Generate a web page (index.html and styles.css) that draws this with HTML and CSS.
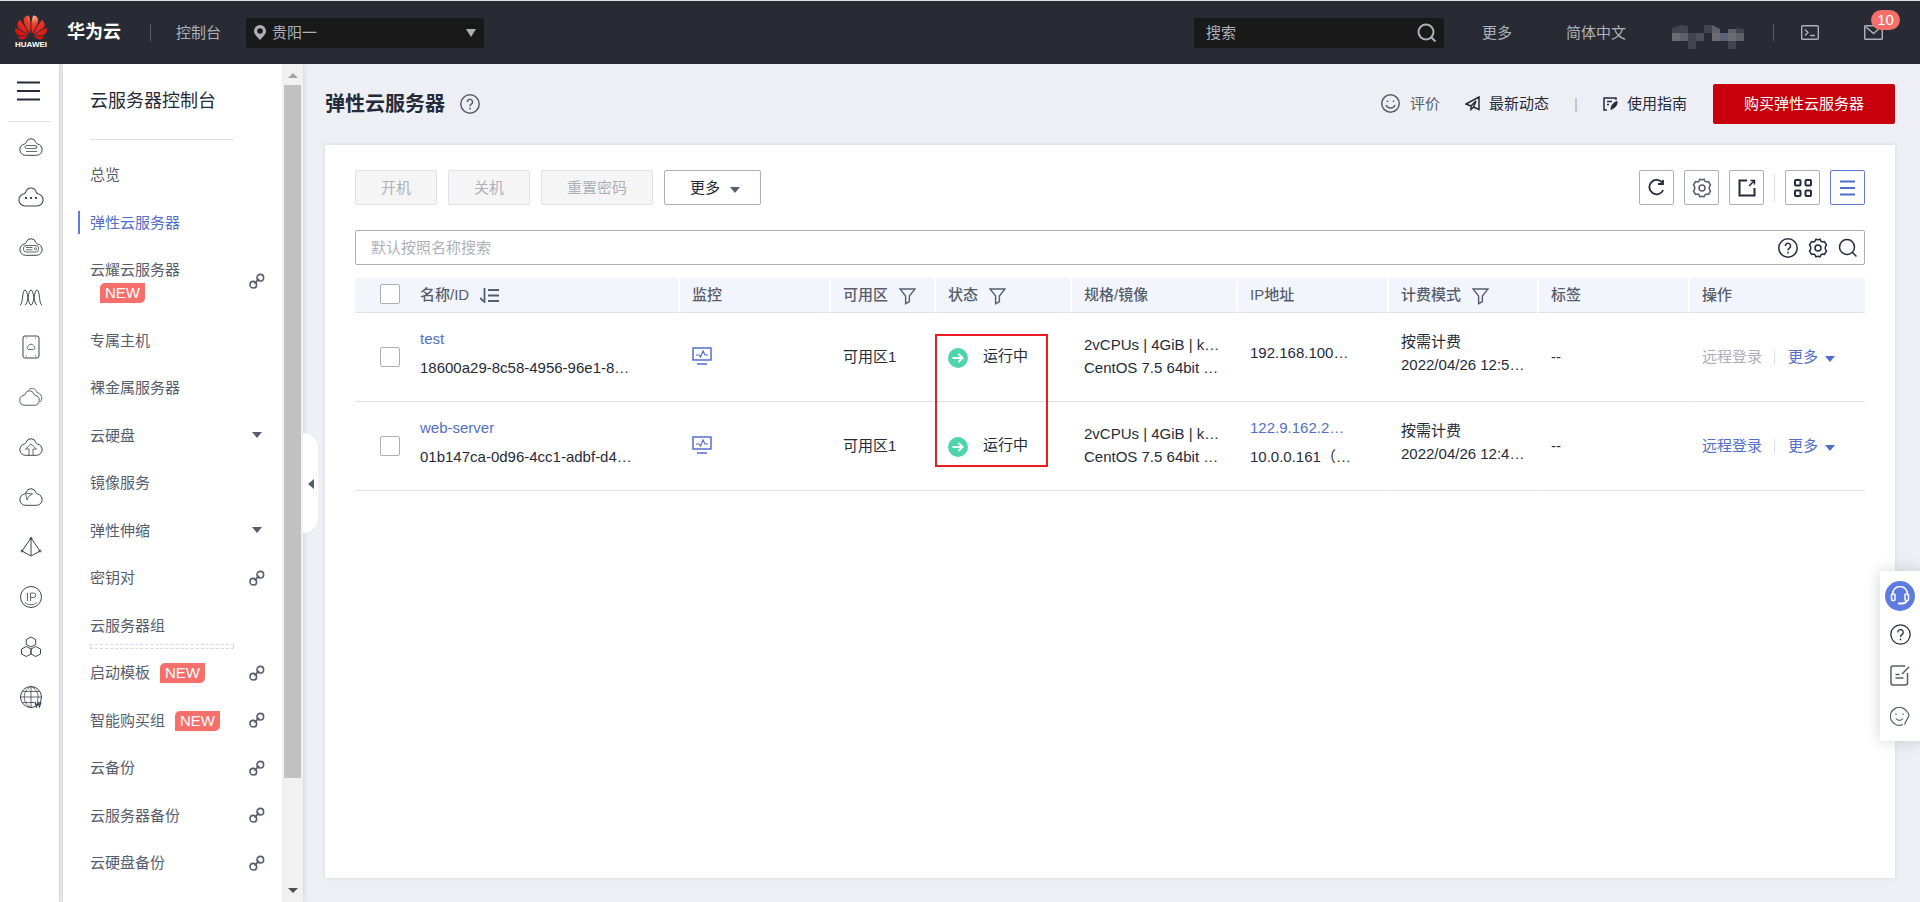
FILE: index.html
```html
<!DOCTYPE html>
<html lang="zh-CN">
<head>
<meta charset="utf-8">
<meta name="viewport" content="width=device-width, initial-scale=1">
<title>弹性云服务器 - 控制台</title>
<link rel="stylesheet" href="styles.css">
</head>
<body>
<svg class="sprite" aria-hidden="true">
  <symbol id="cloud" viewBox="0 0 24 18"><path d="M6.500 17.300a5.700 5.700 0 0 1-1-11.300c.8-.2 1.200-.6 1.700-1.700a5 5 0 0 1 9.600 0c.5 1.100.9 1.500 1.700 1.700a5.700 5.700 0 0 1-1 11.300z"/></symbol>
  <symbol id="link" viewBox="0 0 16 16"><g fill="none" stroke="#575d6c" stroke-width="1.600"><circle cx="4.300" cy="11.700" r="3.300"/><circle cx="11.300" cy="4.700" r="3.300"/><path d="M5.400 10.600l4.800-4.800"/></g></symbol>
  <symbol id="help" viewBox="0 0 20 20"><circle cx="10" cy="10" r="9.200"/><path d="M7.400 8a2.600 2.600 0 1 1 4 2.100c-.9.600-1.400 1.100-1.400 2.200M10 13.800v1.600"/></symbol>
  <symbol id="gear" viewBox="0 0 20 20"><path stroke-linejoin="round" d="M8 1q2 1.500 4 0l.9 2.100 1.300.8 2.300-.3 2 3.400q-2.600 3 0 6l-2 3.400-2.300-.3-1.300.8L12 19q-2-1.500-4 0l-.9-2.100-1.300-.8-2.300.3-2-3.400q2.600-3 0-6l2-3.400 2.300.3 1.300-.8z"/><circle cx="10" cy="10" r="3"/></symbol>
  <symbol id="search" viewBox="0 0 20 20"><circle cx="9" cy="9" r="7.500"/><path d="M14.500 14.500l4 4"/></symbol>
  <symbol id="filter" viewBox="0 0 18 18"><path d="M1 1.500h16L11 9v6l-4 2.200V9z"/></symbol>
  <symbol id="monitor" viewBox="0 0 20 18"><rect x="1" y="1" width="18" height="12"/><path d="M5 17h10"/><path stroke-width="1.200" d="M4 8h3l1.500 2 2.500-6 2 4h3"/></symbol>
  <symbol id="running" viewBox="0 0 20 20"><circle cx="10" cy="10" r="10" fill="#50d4ab"/><path d="M4.500 10h10M10.500 6l4 4-4 4" fill="none" stroke="#fff" stroke-width="2"/></symbol>
</svg>

<header class="topbar">
  <a class="logo" href="#" aria-label="HUAWEI">
    <svg width="32" height="25" viewBox="0 2.900 24 18.200">
      <defs><radialGradient id="petal" cx="14" cy="4" r="16" gradientUnits="userSpaceOnUse"><stop offset="0" stop-color="#fbb08a"/><stop offset=".35" stop-color="#ee3d2c"/><stop offset="1" stop-color="#d8140f"/></radialGradient></defs>
      <path fill="url(#petal)" d="M3.670 6.140S1.820 7.910 1.720 9.780v.35c.08 1.510 1.220 2.400 1.220 2.400 1.830 1.790 6.260 4.040 7.300 4.550 0 0 .06.03.1-.01l.02-.04v-.04C7.520 10.800 3.670 6.140 3.670 6.140zM9.650 18.600c-.02-.08-.1-.08-.1-.08l-7.380.26c.8 1.430 2.150 2.530 3.560 2.200.96-.25 3.160-1.780 3.880-2.300.06-.05.04-.09.04-.09zm.08-.78C6.490 15.630.21 12.280.21 12.280c-.15.46-.2.900-.21 1.300v.07c0 1.070.4 1.820.4 1.820.8 1.690 2.340 2.200 2.340 2.200.7.300 1.400.310 1.400.310.12.02 4.400 0 5.540 0 .05 0 .08-.05.08-.05v-.06c0-.03-.03-.05-.03-.05zM9.060 3.190a3.420 3.420 0 0 0-2.570 3.150v.41c.03.6.16 1.050.16 1.050.66 2.900 3.860 7.650 4.550 8.650.05.05.1.03.1.03a.1.1 0 0 0 .06-.1c1.060-10.600-1.110-13.420-1.110-13.420-.32.02-1.190.23-1.190.23zm8.299 2.270s-.49-1.800-2.440-2.280c0 0-.57-.14-1.170-.22 0 0-2.180 2.810-1.120 13.430.01.07.06.08.06.08.07.03.1-.03.1-.03.72-1.030 3.900-5.760 4.550-8.640 0 0 .36-1.400.02-2.340zm-2.920 13.070s-.07 0-.09.05c0 0-.01.07.03.1.7.510 2.850 2 3.880 2.300 0 0 .16.05.43.06h.14c.69-.02 1.900-.37 3-2.260l-7.400-.25zm7.830-8.410c.14-2.060-1.940-3.970-1.940-3.980 0 0-3.850 4.660-6.670 10.800 0 0-.03.08.02.13l.04.01h.06c1.060-.53 5.460-2.770 7.280-4.540 0 0 1.150-.93 1.210-2.420zm1.520 2.140s-6.280 3.370-9.520 5.550c0 0-.05.04-.03.11 0 0 .03.06.07.06 1.160 0 5.560 0 5.670-.02 0 0 .57-.02 1.270-.29 0 0 1.560-.5 2.370-2.270 0 0 .73-1.450.17-3.140z"/>
    </svg>
    <span>HUAWEI</span>
  </a>
  <a class="brand" href="#">华为云</a>
  <span class="bar-divider"></span>
  <a class="console" href="#">控制台</a>
  <div class="region">
    <svg class="pin" width="12" height="15" viewBox="0 0 12 15"><path fill="#adb0b8" fill-rule="evenodd" d="M6 0a6 6 0 0 1 6 6c0 3.500-3.500 6-6 9C3.500 12 0 9.500 0 6a6 6 0 0 1 6-6zm0 3.200a2.800 2.800 0 1 0 0 5.600 2.800 2.800 0 0 0 0-5.600z"/></svg>
    <select aria-label="区域"><option>贵阳一</option></select>
    <svg class="arrow" width="10" height="8" viewBox="0 0 10 8"><path fill="#adb0b8" d="M0 0h10L5 8z"/></svg>
  </div>
  <div class="top-search">
    <input type="text" placeholder="搜索" aria-label="搜索">
    <svg class="line" width="20" height="20"><use href="#search"/></svg>
  </div>
  <a class="top-more" href="#">更多</a>
  <a class="top-lang" href="#">简体中文</a>
  <svg class="user" width="72" height="24" viewBox="0 0 72 24">
    <path fill="#42454e" d="M0 3l8-3 8 1v8H0zM32 0h8v8h-8zM64 3l8 1v4h-8z"/><path fill="#5f6069" d="M40 0l8 4v4h-8zM8 8h8v8H8zM56 4h8v4h-8zM64 8h8v8h-8z"/><path fill="#6d6c70" d="M0 8h8v8H0zM40 8h8v8h-8zM56 8h8v8h-8z"/><path fill="#4f5059" d="M24 8h8v8h-8z"/><path fill="#5b6177" d="M48 8h8v8h-8z"/><path fill="#3f4550" d="M16 8h8v16h-8zM56 16h8v8h-8z"/>
  </svg>
  <span class="bar-divider"></span>
  <button class="top-icon term" aria-label="命令行"><svg width="18" height="15" viewBox="0 0 18 15" fill="none" stroke="#adb0b8" stroke-width="1.400"><rect x=".7" y=".7" width="16.600" height="13.600" rx="1"/><path d="M4 4.500l3 3-3 3M9 10.500h5"/></svg></button>
  <button class="top-icon mail" aria-label="消息"><svg width="19" height="15" viewBox="0 0 19 15" fill="none" stroke="#adb0b8" stroke-width="1.500"><rect x=".7" y=".7" width="17.600" height="13.600" rx="1"/><path d="M2 2l7.500 6.500L17 2"/></svg><span class="badge">10</span></button>
</header>

<div class="shell">
  <nav class="rail" aria-label="服务">
    <button class="menu" aria-label="菜单"><svg width="23" height="20" viewBox="0 0 23 20"><path stroke="#252b3a" stroke-width="2.200" d="M0 1.500h23M0 10h23M0 18.500h23"/></svg></button>
    <a href="#" aria-label="云服务"><svg viewBox="0 0 26 26"><use href="#cloud" x="1" y="4" width="24" height="18"/><path stroke-width=".8" d="M8.500 11.500h9q1.500 0 1.500 1.500t-1.500 1.500h-9Q7 14.500 7 13t1.500-1.500zM8 17.500h11M16.500 13h1"/></svg></a>
    <a href="#" aria-label="云主机"><svg viewBox="0 0 26 26"><use href="#cloud" x="0" y="3" width="26" height="20"/><path stroke-width="2" stroke-dasharray="2 3" d="M7 14h13"/></svg></a>
    <a href="#" aria-label="云空间"><svg viewBox="0 0 26 26"><use href="#cloud" x="1" y="4" width="24" height="18"/><g stroke-width=".8"><rect x="5.500" y="11.500" width="15" height="6.500" rx="2.500"/><path d="M8 13.500h6.500M8 15.800h6.500"/><circle cx="17.500" cy="14.700" r="1"/></g></svg></a>
    <a href="#" aria-label="弹性伸缩"><svg viewBox="0 0 26 26"><path d="M2 21c3 0 2-15 5-15s3 15 6 15 3-15 6-15 2 15 5 15M7 21C10 21 10 6 13 6s3 15 6 15"/></svg></a>
    <a href="#" aria-label="硬盘"><svg viewBox="0 0 26 26"><rect x="5" y="2" width="16" height="22" rx="2"/><path stroke-width=".8" d="M8 4h1M17 4h1M8 22h1M17 22h1M10.500 15.500h5a2 2 0 0 0 0-3.800 2.800 2.800 0 0 0-5 0 2 2 0 0 0 0 3.800z"/></svg></a>
    <a href="#" aria-label="云"><svg viewBox="0 0 26 26"><use href="#cloud" x="1" y="6" width="21" height="16"/><path stroke-width=".8" d="M10.500 6c3-3.500 8-1 8.500 2.500 4.500 1 6.500 6 3 9.500"/></svg></a>
    <a href="#" aria-label="上传"><svg viewBox="0 0 26 26"><use href="#cloud" x="1" y="4" width="24" height="18"/><path stroke-width=".8" d="M11 21v-6H7.500L13 10l5.500 5H15v6"/></svg></a>
    <a href="#" aria-label="加速"><svg viewBox="0 0 26 26"><use href="#cloud" x="1" y="4" width="24" height="18"/><path stroke-width=".8" d="M7.500 9l7 1-3.500 2-2 4z"/></svg></a>
    <a href="#" aria-label="网络"><svg viewBox="0 0 26 26"><path d="M13 4L4 17l9 5 9-5zM13 4v18"/><circle cx="13" cy="4.500" r="1"/><circle cx="4" cy="17" r="1"/><circle cx="22" cy="17" r="1"/></svg></a>
    <a href="#" aria-label="弹性公网"><svg viewBox="0 0 26 26"><circle cx="13" cy="13" r="10.500"/><path stroke-width=".8" d="M9.500 9v8M12.500 17V9h3a2 2 0 0 1 0 4.500h-3M7 18.500c3 3 9 3 12 0"/></svg></a>
    <a href="#" aria-label="集群"><svg viewBox="0 0 26 26"><path d="M13 3l4.700 2.500v5L13 13l-4.700-2.500v-5zM8.300 12.500L13 15v5l-4.700 2.500L3.500 20v-5zM17.700 12.500l4.800 2.500v5l-4.800 2.500L13 20v-5z"/></svg></a>
    <a href="#" aria-label="域名"><svg viewBox="0 0 26 26"><circle cx="13" cy="13" r="10.500"/><path stroke-width=".8" d="M13 2v22M2 13h22M4.500 7.500h17M4.500 18.500h12M13 2.500c-9 4-9 17 0 21M13 2.500c7 3 8.500 10 6 15"/><path stroke-width="1.400" d="M17 18l1.500 4.500 1.500-4 1.500 4L23 18"/></svg></a>
  </nav>

  <aside class="side">
    <div class="side-body">
      <h2>云服务器控制台</h2>
      <ul>
        <li><a href="#">总览</a></li>
        <li class="active"><a href="#">弹性云服务器</a></li>
        <li class="tall"><a href="#">云耀云服务器<br><span class="new">NEW</span></a><svg class="ext"><use href="#link"/></svg></li>
        <li><a href="#">专属主机</a></li>
        <li><a href="#">裸金属服务器</a></li>
        <li><a href="#">云硬盘</a><i class="caret"></i></li>
        <li><a href="#">镜像服务</a></li>
        <li><a href="#">弹性伸缩</a><i class="caret"></i></li>
        <li><a href="#">密钥对</a><svg class="ext"><use href="#link"/></svg></li>
        <li class="group-end"><a href="#">云服务器组</a></li>
        <li><a href="#">启动模板<span class="new">NEW</span></a><svg class="ext"><use href="#link"/></svg></li>
        <li><a href="#">智能购买组<span class="new">NEW</span></a><svg class="ext"><use href="#link"/></svg></li>
        <li><a href="#">云备份</a><svg class="ext"><use href="#link"/></svg></li>
        <li><a href="#">云服务器备份</a><svg class="ext"><use href="#link"/></svg></li>
        <li><a href="#">云硬盘备份</a><svg class="ext"><use href="#link"/></svg></li>
      </ul>
    </div>
    <div class="scroll" aria-hidden="true">
      <svg width="10" height="5" viewBox="0 0 10 5"><path fill="#a3a3a3" d="M5 0l5 5H0z"/></svg>
      <div class="track"><div class="thumb"></div></div>
      <svg width="10" height="5" viewBox="0 0 10 5"><path fill="#505050" d="M0 0h10L5 5z"/></svg>
    </div>
    <button class="collapse" aria-label="收起"><svg width="6" height="10" viewBox="0 0 6 10"><path fill="#575d6c" d="M6 0v10L0 5z"/></svg></button>
  </aside>

  <main class="main">
    <div class="page-head">
      <h1>弹性云服务器</h1>
      <svg class="line grey" width="20" height="20"><use href="#help"/></svg>
      <div class="head-links">
        <a class="rate" href="#"><svg class="line grey" width="19" height="19" viewBox="0 0 19 19"><circle cx="9.500" cy="9.500" r="8.700"/><path d="M5 11c1.500 4 7.500 4 9 0M6.500 6.500v1.500M12.500 6.500v1.500"/></svg>评价</a>
        <a class="news" href="#"><svg class="line" width="15" height="15" viewBox="0 0 15 15"><path d="M1 8l13-7v12.500L8.500 11 6 13.500V10zM6 10l5-5-2.500 6"/></svg>最新动态</a>
        <span class="pipe">|</span>
        <a class="guide" href="#"><svg class="line" width="15" height="14" viewBox="0 0 15 14"><path d="M13 3V1H1v12h3M4 4.500h5M4 7.500h2"/><path fill="#252b3a" stroke-width="1" d="M14 4.500c.5 4-2 6-6 8 0-4 2.500-7 6-8z"/></svg>使用指南</a>
      </div>
      <button class="buy">购买弹性云服务器</button>
    </div>

    <section class="card">
      <div class="toolbar">
        <button class="btn" disabled>开机</button>
        <button class="btn" disabled>关机</button>
        <button class="btn" disabled>重置密码</button>
        <button class="btn more">更多<i class="caret"></i></button>
        <div class="tools">
          <button class="tool" aria-label="刷新"><svg class="line" width="17" height="17" viewBox="0 0 17 17"><path stroke-width="1.800" d="M14.500 4A7.200 7.200 0 1 0 15.200 11M15 1v4h-5"/></svg></button>
          <button class="tool" aria-label="设置"><svg class="line grey" width="20" height="20"><use href="#gear"/></svg></button>
          <button class="tool" aria-label="导出"><svg class="line" width="18" height="18" viewBox="0 0 18 18"><path stroke-width="2" d="M9 1.500H1.500v15h15V9"/><path d="M11 7l5-5M12.500 1.500h4v4"/></svg></button>
          <span class="tool-divider"></span>
          <button class="tool" aria-label="卡片"><svg class="line" width="18" height="18" viewBox="0 0 18 18"><g stroke-width="2"><rect x="1" y="1" width="5.500" height="5.500" rx="1"/><rect x="11.500" y="1" width="5.500" height="5.500" rx="1"/><rect x="1" y="11.500" width="5.500" height="5.500" rx="1"/><rect x="11.500" y="11.500" width="5.500" height="5.500" rx="1"/></g></svg></button>
          <button class="tool on" aria-label="列表"><svg class="line blue" width="15" height="16" viewBox="0 0 15 16"><path stroke-width="1.800" d="M0 1.500h15M0 8h15M0 14.500h15"/></svg></button>
        </div>
      </div>

      <div class="search">
        <input type="text" placeholder="默认按照名称搜索" aria-label="搜索">
        <svg class="line" width="20" height="20"><use href="#help"/></svg>
        <svg class="line" width="20" height="20"><use href="#gear"/></svg>
        <svg class="line" width="20" height="20"><use href="#search"/></svg>
      </div>

      <table>
        <colgroup><col class="c-check"><col class="c-name"><col class="c-mon"><col class="c-zone"><col class="c-state"><col class="c-spec"><col class="c-ip"><col class="c-bill"><col class="c-tag"><col class="c-ops"></colgroup>
        <thead><tr>
          <th class="check"><input type="checkbox" aria-label="全选"></th>
          <th class="name">名称/ID<svg class="line grey sort" width="19" height="15" viewBox="0 0 19 15"><path stroke-width="1.800" d="M0 10l4.500 4V0M8 2h11M8 7.500h11M8 13h11"/></svg></th>
          <th>监控</th>
          <th>可用区<svg class="line grey filter" width="17" height="18"><use href="#filter"/></svg></th>
          <th>状态<svg class="line grey filter" width="17" height="18"><use href="#filter"/></svg></th>
          <th>规格/镜像</th>
          <th>IP地址</th>
          <th>计费模式<svg class="line grey filter" width="17" height="18"><use href="#filter"/></svg></th>
          <th>标签</th>
          <th>操作</th>
        </tr></thead>
        <tbody>
          <tr>
            <td class="check"><input type="checkbox" aria-label="test"></td>
            <td class="name loose"><a href="#">test</a><br>18600a29-8c58-4956-96e1-8…</td>
            <td><svg class="line blue mon" width="20" height="18"><use href="#monitor"/></svg></td>
            <td>可用区1</td>
            <td class="state"><svg width="20" height="20"><use href="#running"/></svg>运行中<span class="mark"></span></td>
            <td>2vCPUs | 4GiB | k…<br>CentOS 7.5 64bit …</td>
            <td class="loose">192.168.100…</td>
            <td class="bill">按需计费<br>2022/04/26 12:5…</td>
            <td>--</td>
            <td><div class="ops"><button class="op" disabled>远程登录</button><button class="op">更多<i class="caret"></i></button></div></td>
          </tr>
          <tr>
            <td class="check"><input type="checkbox" aria-label="web-server"></td>
            <td class="name loose"><a href="#">web-server</a><br>01b147ca-0d96-4cc1-adbf-d4…</td>
            <td><svg class="line blue mon" width="20" height="18"><use href="#monitor"/></svg></td>
            <td>可用区1</td>
            <td class="state"><svg width="20" height="20"><use href="#running"/></svg>运行中</td>
            <td>2vCPUs | 4GiB | k…<br>CentOS 7.5 64bit …</td>
            <td class="loose"><a href="#">122.9.162.2…</a><br>10.0.0.161（…</td>
            <td class="bill">按需计费<br>2022/04/26 12:4…</td>
            <td>--</td>
            <td><div class="ops"><button class="op">远程登录</button><button class="op">更多<i class="caret"></i></button></div></td>
          </tr>
        </tbody>
      </table>
    </section>
  </main>
</div>

<div class="float">
  <button class="agent" aria-label="客服"><svg width="20" height="20" viewBox="0 0 20 20" fill="none" stroke="#fff" stroke-width="1.500"><path d="M2.500 9V8a7.500 7.500 0 0 1 15 0v1"/><rect x="1.500" y="8" width="3.500" height="6.500" rx="1"/><rect x="15" y="8" width="3.500" height="6.500" rx="1"/><path d="M17 14.500c-1 2.500-3 3-5 3M8 17.500h4" stroke-width="2"/></svg></button>
  <button aria-label="帮助"><svg class="line thin" width="21" height="21"><use href="#help"/></svg></button>
  <button aria-label="反馈"><svg class="line grey" width="20" height="21" viewBox="0 0 20 21"><path d="M15 1H3a2 2 0 0 0-2 2v15a2 2 0 0 0 2 2h12.500a2 2 0 0 0 2-2V8M19 2l-7 7M5.500 9.500h4M5.500 13h8"/></svg></button>
  <button aria-label="评价"><svg class="line grey thin" width="20" height="20" viewBox="0 0 20 20"><path d="M17.500 6.500A9 9 0 1 0 13 18.500M14.500 18.500l4.500-9-1-3M6 12.500c1.500 2.500 5.500 2.500 7 0M6 7.500v1.500M13 7.500v1.500"/></svg></button>
</div>
</body>
</html>
```
FILE: styles.css
```css
* { box-sizing: border-box; }

body {
  margin: 0;
  height: 100vh;
  display: flex;
  flex-direction: column;
  overflow: hidden;
  background: #eeeff5;
  color: #252b3a;
  font: 15px/23px "Liberation Sans", "Noto Sans CJK SC", sans-serif;
}

a { color: #526ecc; text-decoration: none; }
button, input, select { font: inherit; }
button { cursor: pointer; }
svg { flex: none; }

.sprite { position: absolute; width: 0; height: 0; }
.line { fill: none; stroke: #252b3a; stroke-width: 1.500; }
.grey { stroke: #575d6c; }
.blue { stroke: #526ecc; }
.thin { stroke-width: 1.200; }

.caret {
  display: inline-block;
  border: 5px solid transparent;
  border-top: 6px solid #575d6c;
  border-bottom: 0;
}

/* Top bar */
.topbar {
  flex: none;
  display: flex;
  align-items: center;
  height: 64px;
  padding: 0 37px 0 15px;
  border-top: 1px solid #dbe7e5;
  background: #282b33;
}
.topbar a { color: #adb0b8; }
.logo { display: flex; flex-direction: column; align-items: center; width: 32px; }
.topbar .logo span { color: #fff; font-size: 8px; line-height: 10px; font-weight: 700; }
.topbar .brand { margin-left: 20px; color: #fff; font-size: 18px; font-weight: 700; }
.bar-divider { width: 1px; height: 17px; background: #575d6c; }
.brand + .bar-divider { margin-left: 29px; }
.console { margin-left: 25px; }
.region, .top-search {
  display: flex;
  align-items: center;
  height: 30px;
  border-radius: 2px;
  background: #191919;
}
.region { position: relative; width: 238px; margin-left: 25px; }
.region select {
  width: 100%;
  height: 30px;
  padding: 0 30px 0 26px;
  border: 0;
  appearance: none;
  background: transparent;
  color: #adb0b8;
}
.pin { position: absolute; left: 8px; }
.arrow { position: absolute; right: 8px; }
.top-search { width: 250px; margin-left: auto; padding: 0 7px 0 12px; }
.top-search input { flex: 1; min-width: 0; padding: 0; border: 0; outline: 0; background: transparent; color: #fff; }
.top-search input::placeholder { color: #adb0b8; }
.top-search .line { stroke: #adb0b8; stroke-width: 2; }
.top-more { margin-left: 38px; }
.top-lang { margin-left: 54px; }
.user { margin: 8px 29px 0 46px; }
.top-icon { position: relative; display: flex; padding: 0; border: 0; background: none; }
.term { margin-left: 27px; }
.mail { margin-left: 45px; }
.badge {
  position: absolute;
  left: 7px;
  top: -15px;
  width: 29px;
  border-radius: 10px;
  background: #f66f6a;
  color: #fff;
  line-height: 20px;
  text-align: center;
}

.shell { flex: 1; min-height: 0; display: flex; }

/* Icon rail */
.rail {
  flex: none;
  display: flex;
  flex-direction: column;
  align-items: center;
  width: 60px;
  padding: 0 9px 0 8px;
  border-right: 1px solid #d5d8e2;
  background: #fff;
}
.menu { width: 100%; height: 58px; padding: 2px 9px 0; border: 0; border-bottom: 1px solid #dfe1e6; background: none; text-align: left; }
.rail a { display: flex; align-items: center; height: 50px; padding-left: 4px; }
.rail a svg { width: 26px; height: 26px; fill: none; stroke: #3f4554; stroke-width: 1; }

/* Side navigation */
.side { position: relative; flex: none; display: flex; width: 240px; margin-left: 3px; background: #fff; box-shadow: 0 0 5px rgba(37, 43, 58, .2); }
.side-body { flex: 1; overflow: hidden; }
.side h2 { margin: 0 48px 0 27px; padding: 25px 0 26px; border-bottom: 1px solid #dfe1e6; font-size: 18px; line-height: 24px; font-weight: 400; white-space: nowrap; }
.side ul { margin: 0; padding: 11px 0 0; list-style: none; }
.side li {
  display: flex;
  align-items: center;
  justify-content: space-between;
  height: 47px;
  padding: 0 17px 0 27px;
}
.side li:nth-child(even) { height: 48px; }
.side li a { color: #575d6c; }
.side li .caret { margin-right: 3px; }
.side .active { padding-left: 15px; }
.side .active a { padding-left: 10px; border-left: 2px solid #5e7ce0; color: #526ecc; }
.side .tall { height: 70px; }
.side .group-end { position: relative; }
.side .group-end::after { content: ""; position: absolute; left: 27px; right: 48px; bottom: 0; height: 3px; border: 1px dashed #d5d8e2; }
.ext { width: 16px; height: 16px; }
.new {
  display: inline-block;
  margin-left: 10px;
  padding: 0 5px;
  border-radius: 5px 0;
  background: #f66f6a;
  color: #fff;
  line-height: 20px;
}
.scroll { display: flex; flex-direction: column; align-items: center; width: 21px; padding: 9px 0; background: #f1f1f1; }
.track { flex: 1; width: 17px; margin: 7px 0; }
.thumb { height: 87%; background: #c1c1c1; }
.collapse {
  position: absolute;
  left: 100%;
  top: 369px;
  width: 15px;
  height: 100px;
  padding: 0 4px;
  border: 0;
  border-radius: 0 15px 15px 0;
  background: #fff;
}

/* Content */
.main { flex: 1; min-width: 0; display: flex; flex-direction: column; padding: 0 25px 24px 22px; }
.page-head { display: flex; align-items: center; height: 81px; padding-bottom: 2px; }
.page-head h1 { margin: 0 15px 0 0; font-size: 20px; line-height: 28px; }
.head-links { display: flex; align-items: center; margin-left: auto; }
.head-links a { display: flex; align-items: center; color: #252b3a; }
.head-links .rate { gap: 10px; color: #575d6c; }
.head-links .news, .head-links .guide { gap: 9px; }
.news { margin-left: 25px; }
.pipe { margin: 0 25px; color: #adb0b8; }
.buy { height: 40px; margin-left: 26px; padding: 0 31px; border: 0; border-radius: 2px; background: #c7000b; color: #fff; }

.card { flex: 1; padding: 25px 30px; background: #fff; box-shadow: 0 0 4px rgba(37, 43, 58, .12); }
.toolbar { display: flex; align-items: center; gap: 11px; }
.btn { height: 35px; padding: 0 25px; border: 1px solid #adb0b8; border-radius: 2px; background: #fff; color: #252b3a; }
.btn:disabled { border-color: #dfe1e6; background: #f5f5f6; color: #adb0b8; }
.more { padding-right: 20px; }
.more .caret { margin-left: 10px; }
.tools { display: flex; align-items: center; gap: 10px; margin-left: auto; }
.tool { display: grid; place-items: center; width: 35px; height: 35px; padding: 0; border: 1px solid #adb0b8; border-radius: 2px; background: #fff; }
.tool.on { border-color: #5e7ce0; }
.tool-divider { width: 1px; height: 30px; background: #dfe1e6; }

.search { display: flex; align-items: center; gap: 10px; height: 35px; margin: 25px 0 13px; padding: 0 6px 0 15px; border: 1px solid #adb0b8; border-radius: 2px; }
.search input { flex: 1; min-width: 0; padding: 0; border: 0; outline: 0; background: transparent; color: #252b3a; }
.search input::placeholder { color: #adb0b8; }

/* Server table */
table { width: 100%; table-layout: fixed; border-spacing: 0; }
.c-check { width: 65px; }
.c-name { width: 258px; }
.c-mon, .c-ip, .c-tag { width: 151px; }
.c-zone { width: 105px; }
.c-state { width: 136px; }
.c-spec { width: 166px; }
.c-bill { width: 150px; }
.c-ops { width: 177px; }
th, td { padding: 0 0 2px 12px; border-bottom: 1px solid #dfe1e6; text-align: left; white-space: nowrap; }
th { height: 35px; border-left: 2px solid #fff; background: #f2f5fc; color: #575d6c; font-weight: 500; }
td { height: 89px; border-left: 2px solid transparent; }
.check { padding-left: 25px; border-left: 0; }
td.check { padding-bottom: 0; }
.name { padding-left: 0; border-left: 0; }
.loose { padding-bottom: 9px; line-height: 29px; }
.bill { padding-bottom: 8px; }
th svg { vertical-align: middle; }
.sort { margin-left: 11px; }
.filter { margin-left: 11px; }
.mon { display: block; }
input[type="checkbox"] {
  display: block;
  width: 20px;
  height: 20px;
  margin: 0;
  border: 1px solid #adb0b8;
  border-radius: 2px;
  appearance: none;
  background: #fff;
}
.state { position: relative; }
.state svg { margin-right: 15px; vertical-align: middle; }
.mark { position: absolute; left: -1px; top: 21px; width: 113px; height: 133px; border: 2px solid #ed1c24; pointer-events: none; }
.ops { display: flex; align-items: center; }
.op { padding: 0; border: 0; background: none; color: #526ecc; }
.op:disabled { color: #adb0b8; }
.op .caret { margin-left: 7px; border-top-color: #526ecc; }
.op + .op::before { content: ""; display: inline-block; width: 1px; height: 15px; margin: 0 13px 0 12px; background: #dfe1e6; vertical-align: middle; }

/* Floating help panel */
.float {
  position: fixed;
  right: 0;
  top: 571px;
  display: flex;
  flex-direction: column;
  align-items: center;
  gap: 20px;
  width: 40px;
  height: 170px;
  padding-top: 10px;
  background: #fff;
  box-shadow: 0 0 15px rgba(37, 43, 58, .2);
}
.float button { display: flex; padding: 0; border: 0; background: none; }
.float .agent { width: 30px; height: 30px; margin-bottom: -7px; padding: 5px; border-radius: 50%; background: #5e7ce0; }
```
